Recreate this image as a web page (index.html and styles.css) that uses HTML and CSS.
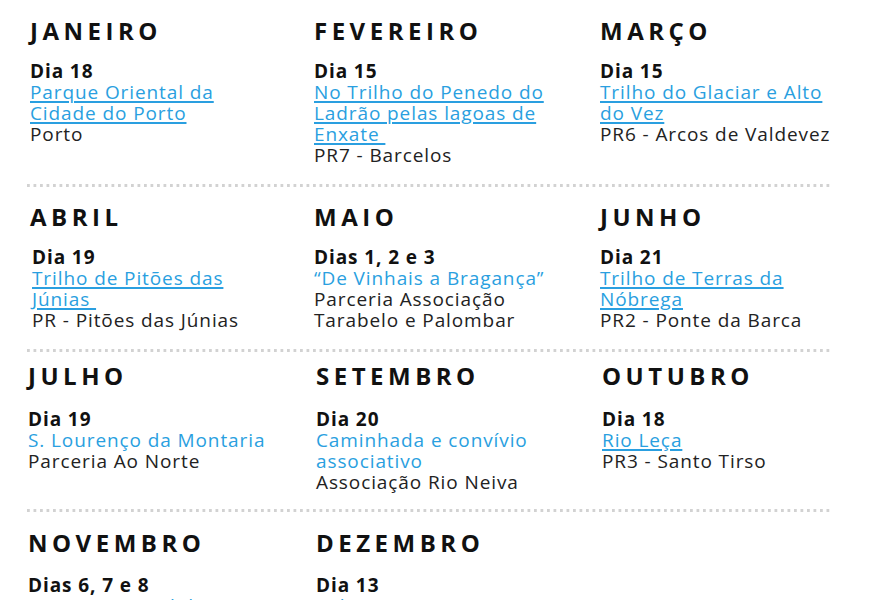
FILE: index.html
```html
<!DOCTYPE html>
<html lang="pt">
<head>
<meta charset="utf-8">
<title>Calendário</title>
<link rel="stylesheet" href="styles.css">
</head>
<body>
<div class="calendar">
  <section class="row">
    <div class="cell">
      <h2 class="month">JANEIRO</h2>
      <p class="day">Dia 18</p>
      <a class="event link" href="#">Parque Oriental da Cidade do Porto</a>
      <p class="place">Porto</p>
    </div>
    <div class="cell">
      <h2 class="month">FEVEREIRO</h2>
      <p class="day">Dia 15</p>
      <a class="event link" href="#">No Trilho do Penedo do Ladrão pelas lagoas de Enxate&nbsp;</a>
      <p class="place">PR7 - Barcelos</p>
    </div>
    <div class="cell">
      <h2 class="month">MARÇO</h2>
      <p class="day">Dia 15</p>
      <a class="event link" href="#">Trilho do Glaciar e Alto do Vez</a>
      <p class="place">PR6 - Arcos de Valdevez</p>
    </div>
  </section>
  <div class="sep"></div>
  <section class="row">
    <div class="cell">
      <h2 class="month">ABRIL</h2>
      <div class="inset">
        <p class="day">Dia 19</p>
        <a class="event link" href="#">Trilho de Pitões das Júnias&nbsp;</a>
        <p class="place">PR - Pitões das Júnias</p>
      </div>
    </div>
    <div class="cell">
      <h2 class="month">MAIO</h2>
      <p class="day">Dias 1, 2 e 3</p>
      <p class="event">“De Vinhais a Bragança”</p>
      <p class="place">Parceria Associação Tarabelo e Palombar</p>
    </div>
    <div class="cell">
      <h2 class="month">JUNHO</h2>
      <p class="day">Dia 21</p>
      <a class="event link" href="#">Trilho de Terras da Nóbrega</a>
      <p class="place">PR2 - Ponte da Barca</p>
    </div>
  </section>
  <div class="sep"></div>
  <section class="row row-tight">
    <div class="cell cell-left">
      <h2 class="month">JULHO</h2>
      <p class="day">Dia 19</p>
      <p class="event">S. Lourenço da Montaria</p>
      <p class="place">Parceria Ao Norte</p>
    </div>
    <div class="cell cell-right">
      <h2 class="month">SETEMBRO</h2>
      <p class="day">Dia 20</p>
      <p class="event">Caminhada e convívio associativo</p>
      <p class="place">Associação Rio Neiva</p>
    </div>
    <div class="cell cell-right">
      <h2 class="month">OUTUBRO</h2>
      <p class="day">Dia 18</p>
      <a class="event link" href="#">Rio Leça</a>
      <p class="place">PR3 - Santo Tirso</p>
    </div>
  </section>
  <div class="sep"></div>
  <section class="row row-last">
    <div class="cell cell-left">
      <h2 class="month">NOVEMBRO</h2>
      <p class="day">Dias 6, 7 e 8</p>
      <a class="event link" href="#">Parque Natural do Douro Internacional</a>
    </div>
    <div class="cell cell-right">
      <h2 class="month">DEZEMBRO</h2>
      <p class="day">Dia 13</p>
      <a class="event link" href="#">Palestra e visita ao Rio Maior</a>
    </div>
    <div class="cell"></div>
  </section>
</div>
</body>
</html>
```
FILE: styles.css
```css
html, body {
  margin: 0;
  padding: 0;
  background: #ffffff;
}

body {
  font-family: "Open Sans", "Liberation Sans", sans-serif;
  color: #1c1c1c;
  width: 882px;
  height: 600px;
  overflow: hidden;
}

.calendar {
  margin-left: 27px;
  width: 806px;
  padding-top: 1px;
}

.row {
  display: grid;
  grid-template-columns: 284px 286px 250px;
  padding: 15px 0 18px;
}

.row-tight {
  padding-top: 9px;
  padding-bottom: 16px;
}

.row-tight .month {
  margin-bottom: 18px;
}

.row-last {
  padding-top: 16px;
}

.row-last .month {
  margin-bottom: 17px;
}

.cell {
  padding-left: 3px;
}

.cell > .day,
.cell > .event,
.cell > .place,
.inset {
  max-width: 246px;
}

.cell-left {
  padding-left: 1px;
}

.cell-right {
  padding-left: 5px;
}

.inset {
  padding-left: 2px;
}

.month {
  margin: 0 0 15px;
  font-size: 24px;
  line-height: 30px;
  font-weight: 700;
  letter-spacing: 4.5px;
  color: #111111;
}

.day,
.event,
.place {
  margin: 0;
  font-size: 19px;
  line-height: 21px;
  letter-spacing: 0.9px;
}

.day {
  font-weight: 700;
  color: #111111;
}

.event {
  display: block;
  color: #2a9fe0;
}

.link {
  text-decoration: underline;
  text-decoration-thickness: 2px;
  text-underline-offset: 2px;
}

.place {
  color: #222222;
}

.sep {
  height: 3px;
  background-image: linear-gradient(to right, #d2d2d2 0, #d2d2d2 3px, transparent 3px);
  background-size: 6.5px 3px;
  background-repeat: repeat-x;
}
```
